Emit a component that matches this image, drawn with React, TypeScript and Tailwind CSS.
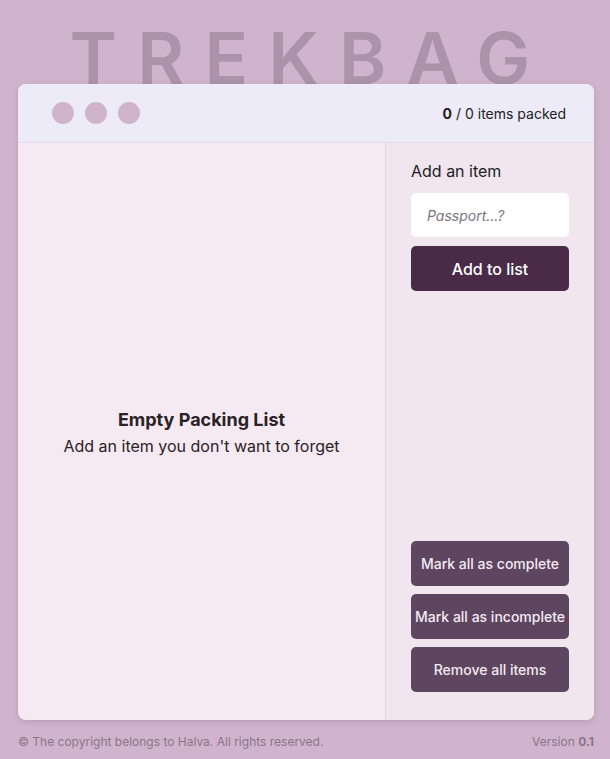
import React from "react";

export default function App() {
  return (
    <div
      className="min-h-[759px] bg-[#d0b4cd] flex flex-col items-start pl-[18px]"
      style={{ fontFamily: "Inter, 'Noto Sans', sans-serif" }}
    >
      <h1 className="relative self-stretch pr-[8px] text-center mt-[22px] text-[72px] leading-none font-semibold tracking-[0.28em] text-[#ab94a9] select-none">
        TREKBAG
      </h1>
      <main className="relative z-10 -mt-[10px] w-[576px] h-[636px] rounded-lg bg-[#f5e9f2] shadow-[0_2px_6px_rgba(0,0,0,0.12)] flex flex-col overflow-hidden">
        <header className="h-[59px] shrink-0 bg-[#ecebf7] border-b border-[#e1d8e8] flex items-center justify-between pl-[34px] pr-[28px]">
          <div className="flex gap-[11px]">
            <span className="w-[22px] h-[22px] rounded-full bg-[#d0b4cd]" />
            <span className="w-[22px] h-[22px] rounded-full bg-[#d0b4cd]" />
            <span className="w-[22px] h-[22px] rounded-full bg-[#d0b4cd]" />
          </div>
          <p className="text-[14px] text-[#231d24]">
            <b className="font-bold">0</b> / 0 items packed
          </p>
        </header>
        <div className="flex flex-1 min-h-0">
          <section className="flex-1 flex flex-col items-center justify-center text-[#2b2226]">
            <h3 className="text-[18px] font-bold leading-[28px]">Empty Packing List</h3>
            <p className="text-[16px] leading-[24px]">Add an item you don't want to forget</p>
          </section>
          <aside className="w-[209px] shrink-0 bg-[#f1e5ee] border-l border-[#e4d6e1] flex flex-col justify-between pt-[16px] pb-[28px] px-[25px]">
            <form className="flex flex-col" onSubmit={(e) => e.preventDefault()}>
              <h2 className="text-[16px] leading-[24px] font-normal text-[#231d24] mb-[10px]">Add an item</h2>
              <input
                className="h-[44px] rounded-[5px] bg-white px-[16px] text-[14px] italic placeholder:text-[#7d7481] outline-none"
                placeholder="Passport...?"
              />
              <button className="mt-[9px] h-[45px] rounded-[5px] bg-[#4a2b47] text-white text-[16px] font-medium">
                Add to list
              </button>
            </form>
            <div className="flex flex-col gap-[8px]">
              <button className="h-[45px] rounded-[5px] bg-[#5f4660] text-[#f3eaf2] text-[14px] font-medium">
                Mark all as complete
              </button>
              <button className="h-[45px] rounded-[5px] bg-[#5f4660] text-[#f3eaf2] text-[14px] font-medium">
                Mark all as incomplete
              </button>
              <button className="h-[45px] rounded-[5px] bg-[#5f4660] text-[#f3eaf2] text-[14px] font-medium">
                Remove all items
              </button>
            </div>
          </aside>
        </div>
      </main>
      <footer className="w-[576px] flex justify-between mt-[13px] text-[12px] text-[#8b7589]">
        <small className="text-[12px]">© The copyright belongs to Halva. All rights reserved.</small>
        <p>
          Version <b className="font-bold">0.1</b>
        </p>
      </footer>
    </div>
  );
}
